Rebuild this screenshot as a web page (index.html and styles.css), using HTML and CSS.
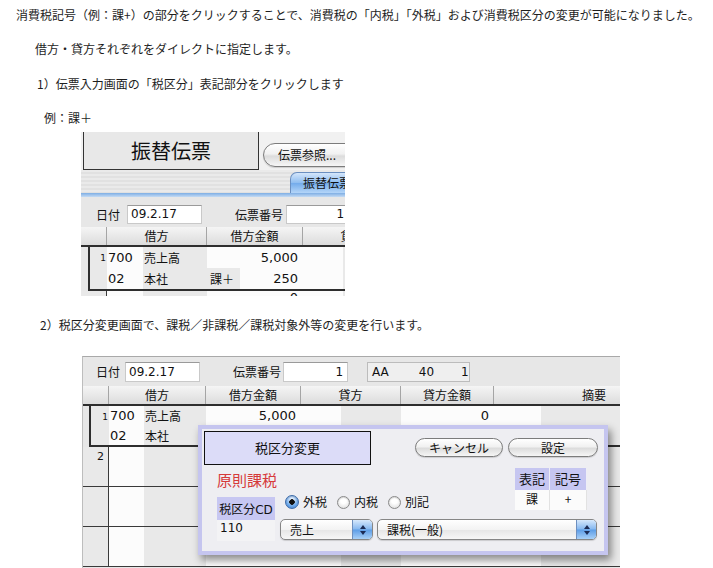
FILE: index.html
```html
<!DOCTYPE html>
<html lang="ja">
<head>
<meta charset="utf-8">
<title>税区分変更</title>
<link rel="stylesheet" href="styles.css">
</head>
<body>
<p class="t lead">消費税記号（例：課+）の部分をクリックすることで、消費税の「内税」「外税」および消費税区分の変更が可能になりました。</p>
<p class="t sub">借方・貸方それぞれをダイレクトに指定します。</p>
<p class="t step1">1）伝票入力画面の「税区分」表記部分をクリックします</p>
<p class="t ex">例：課＋</p>

<div class="shot shot1">
  <div class="s1-top">
    <div class="s1-title">振替伝票</div>
    <div class="s1-btnwrap"><div class="aqua-btn s1-btn">伝票参照...</div></div>
  </div>
  <div class="s1-band"><div class="s1-tab">振替伝票</div></div>
  <div class="s1-blue"></div>
  <div class="form f1">
    <span class="lbl l-date">日付</span>
    <span class="inp i-date">09.2.17</span>
    <span class="lbl l-no">伝票番号</span>
    <span class="inp i-no">1</span>
  </div>
  <div class="hdr g1">
    <div class="h"></div>
    <div class="h s2">借方</div>
    <div class="h">借方金額</div>
    <div class="h s2">貸方</div>
  </div>
  <div class="box b1">
    <div class="row g1b">
      <div class="rn">1</div>
      <div class="c w lat">700</div>
      <div class="c g">売上高</div>
      <div class="c w num">5,000</div>
      <div class="c w"></div>
      <div class="c g"></div>
    </div>
    <div class="row g1b">
      <div class="rn"></div>
      <div class="c w lat">02</div>
      <div class="c g">本社</div>
      <div class="c split"><span class="tax">課＋</span><span class="amt num">250</span></div>
      <div class="c w"></div>
      <div class="c g"></div>
    </div>
  </div>
  <div class="erow1 g1">
    <div class="rn2"></div>
    <div class="c w"></div>
    <div class="c g"></div>
    <div class="c w num">0</div>
    <div class="c w"></div>
    <div class="c g"></div>
  </div>
</div>

<p class="t step2">2）税区分変更画面で、課税／非課税／課税対象外等の変更を行います。</p>

<div class="shot shot2">
  <div class="form f2">
    <span class="lbl l-date">日付</span>
    <span class="inp i-date">09.2.17</span>
    <span class="lbl l-no">伝票番号</span>
    <span class="inp i-no">1</span>
    <span class="aa"><span>AA</span><span class="aa40">40</span><span class="aa1">1</span></span>
  </div>
  <div class="hdr g2">
    <div class="h"></div>
    <div class="h s2">借方</div>
    <div class="h">借方金額</div>
    <div class="h s2">貸方</div>
    <div class="h">貸方金額</div>
    <div class="h s2 hright">摘要</div>
  </div>
  <div class="box b2">
    <div class="row g2b">
      <div class="rn">1</div>
      <div class="c w lat">700</div>
      <div class="c g">売上高</div>
      <div class="c w num">5,000</div>
      <div class="c w"></div>
      <div class="c g"></div>
      <div class="c w num">0</div>
      <div class="c w"></div>
      <div class="c g"></div>
    </div>
    <div class="row g2b">
      <div class="rn"></div>
      <div class="c w lat">02</div>
      <div class="c g">本社</div>
      <div class="c g"></div>
      <div class="c w"></div>
      <div class="c g"></div>
      <div class="c w"></div>
      <div class="c w"></div>
      <div class="c g"></div>
    </div>
  </div>
  <div class="erow g2">
    <div class="rn2">2</div>
    <div class="c w"></div><div class="c g"></div><div class="c w"></div><div class="c w"></div>
    <div class="c g"></div><div class="c w"></div><div class="c w"></div><div class="c g"></div>
  </div>
  <div class="erow g2">
    <div class="rn2"></div>
    <div class="c w"></div><div class="c g"></div><div class="c w"></div><div class="c w"></div>
    <div class="c g"></div><div class="c w"></div><div class="c w"></div><div class="c g"></div>
  </div>
  <div class="erow g2">
    <div class="rn2"></div>
    <div class="c w"></div><div class="c g"></div><div class="c w"></div><div class="c w"></div>
    <div class="c g"></div><div class="c w"></div><div class="c w"></div><div class="c g"></div>
  </div>

  <div class="dlg">
    <div class="dlg-top">
      <div class="dlg-title">税区分変更</div>
      <div class="dlg-btns">
        <div class="aqua-btn b-cancel">キャンセル</div>
        <div class="aqua-btn b-set">設定</div>
      </div>
    </div>
    <div class="dlg-body">
      <div class="gensoku">原則課税</div>
      <div class="kigo">
        <div class="kh">表記</div><div class="kh">記号</div>
        <div class="kd">課</div><div class="kd">+</div>
      </div>
      <div class="cd-lbl">税区分<span class="lat">CD</span></div>
      <div class="cd-val lat">110</div>
      <div class="radios">
        <span class="radio on"></span><span class="rl">外税</span>
        <span class="radio"></span><span class="rl">内税</span>
        <span class="radio"></span><span class="rl">別記</span>
      </div>
      <div class="pop pop1"><span class="pt">売上</span><span class="pa"><svg width="8" height="12" viewBox="0 0 8 12"><path d="M4 1 L7 5 L1 5 Z M4 11 L1 7 L7 7 Z" fill="#1b2b55"/></svg></span></div>
      <div class="pop pop2"><span class="pt">課税(一般)</span><span class="pa"><svg width="8" height="12" viewBox="0 0 8 12"><path d="M4 1 L7 5 L1 5 Z M4 11 L1 7 L7 7 Z" fill="#1b2b55"/></svg></span></div>
    </div>
  </div>
</div>
</body>
</html>
```

FILE: styles.css
```css
* { box-sizing: border-box; }
html, body { margin: 0; padding: 0; }
body {
  width: 713px;
  height: 568px;
  overflow: hidden;
  background: #fff;
  color: #1e1e1e;
  font-family: "Noto Sans CJK JP", "Noto Sans", sans-serif;
}
.t {
  margin: 0;
  font-size: 12px;
  line-height: 20px;
  height: 20px;
  white-space: nowrap;
}
.lead { margin-top: 5px; padding-left: 16px; }
.sub { margin-top: 14px; padding-left: 35px; }
.step1 { margin-top: 15px; padding-left: 37px; }
.ex { margin-top: 14px; padding-left: 44px; }
.step2 { margin-top: 19px; padding-left: 40px; }

.lat { font-family: "DejaVu Sans", "Noto Sans CJK JP", sans-serif; }

.shot {
  position: relative;
  overflow: hidden;
  background: #e7e7e7;
  font-size: 12px;
  color: #111;
}
.shot1 { margin: 4px 0 0 81px; width: 264px; height: 164px; }
.shot2 {
  margin: 21px 0 0 82px;
  width: 538px;
  height: 212px;
  border-top: 1px solid #a9a9a9;
  border-left: 1px solid #bdbdbd;
}

/* shot 1 top part */
.s1-top { display: flex; height: 38px; background: #f1f1f1; }
.s1-title {
  margin-left: 2px;
  width: 176px;
  height: 38px;
  flex: none;
  background: #e8e8e8;
  border: 1px solid #333;
  border-top: none;
  font-size: 20px;
  display: flex;
  align-items: center;
  justify-content: center;
}
.s1-btnwrap { padding: 11px 0 0 4px; }
.aqua-btn {
  height: 19px;
  border: 1px solid #7c7c7c;
  border-radius: 10px;
  background: linear-gradient(#ffffff, #f1f1f1 45%, #dcdcdc 55%, #f6f6f6);
  box-shadow: 0 1px 1px rgba(0,0,0,.15);
  font-size: 12px;
  line-height: 17px;
  text-align: center;
  flex: none;
}
.s1-btn {
  width: 100px;
  height: 24px;
  line-height: 22px;
  border-radius: 12px;
  text-align: left;
  padding-left: 14px;
}
.s1-band {
  height: 23px;
  display: flex;
  padding: 2px 0 0 209px;
  background: repeating-linear-gradient(#eaeaea 0 2px, #e1e1e1 2px 4px);
}
.s1-tab {
  width: 70px;
  height: 21px;
  flex: none;
  border: 1px solid #6b8fc0;
  border-bottom: none;
  border-radius: 7px 0 0 0;
  background: linear-gradient(#d4e6fb, #8dbcf0 50%, #74acec 52%, #b4d5f8);
  font-size: 12px;
  line-height: 20px;
  padding-left: 12px;
  white-space: nowrap;
}
.s1-blue { height: 4px; background: linear-gradient(#7eaee4, #c4dbf4); }

/* form rows */
.form { display: flex; align-items: flex-start; white-space: nowrap; }
.f1 { height: 30px; padding-top: 8px; }
.f2 { height: 29px; padding-top: 5px; }
.lbl { font-size: 12px; line-height: 19px; flex: none; }
.inp {
  flex: none;
  height: 19px;
  background: #fff;
  border: 1px solid #c9c9c9;
  border-top-color: #9a9a9a;
  font-family: "DejaVu Sans", sans-serif;
  font-size: 12px;
  line-height: 17px;
  padding: 0 3px;
}
.f2 .inp { height: 20px; line-height: 18px; }
.f1 .l-date { margin-left: 15px; }
.f1 .i-date { margin-left: 7px; width: 75px; }
.f1 .l-no { margin-left: 33px; }
.f1 .i-no { margin-left: 3px; width: 62px; text-align: right; }
.f2 .l-date { margin-left: 13px; }
.f2 .i-date { margin-left: 5px; width: 75px; }
.f2 .l-no { margin-left: 33px; }
.f2 .i-no { margin-left: 2px; width: 65px; text-align: right; padding-right: 4px; }
.aa {
  flex: none;
  margin-left: 19px;
  width: 103px;
  height: 20px;
  display: flex;
  border: 1px solid #bcbcbc;
  background: #efefef;
  font-family: "DejaVu Sans", sans-serif;
  font-size: 12px;
  line-height: 18px;
  padding-left: 4px;
}
.aa40 { margin-left: 30px; }
.aa1 { margin-left: 27px; }

/* tables */
.g1 { display: grid; grid-template-columns: 26px 36px 64px 96px 40px 60px; }
.g1b { display: grid; grid-template-columns: 17px 36px 64px 96px 40px 60px; }
.g2 { display: grid; grid-template-columns: 26px 35px 62px 95px 40px 60px 93px 47px 80px; }
.g2b { display: grid; grid-template-columns: 18px 35px 62px 95px 40px 60px 93px 47px 80px; }

.hdr {
  height: 20px;
  border-bottom: 2px solid #2e2e2e;
}
.shot1 .hdr { width: 322px; }
.h {
  background: linear-gradient(#f5f5f5, #dcdcdc);
  border-right: 1px solid #a5a5a5;
  text-align: center;
  line-height: 18px;
  white-space: nowrap;
  overflow: hidden;
}
.s2 { grid-column: span 2; }
.hright { text-align: right; padding-right: 14px; }

.box {
  border-left: 2px solid #2e2e2e;
  border-bottom: 2px solid #2e2e2e;
}
.b1 { margin-left: 7px; width: 330px; }
.b2 { margin-left: 6px; width: 540px; }
.b1 .row { height: 21px; }
.b2 .row { height: 19.5px; }
.c { white-space: nowrap; overflow: hidden; line-height: 19px; }
.b1 .c { line-height: 21px; }
.w { background: #fcfcfc; }
.g { background: #e9e9e9; }
.lat.c { padding-left: 1px; font-size: 13px; }
.c.g { padding-left: 1px; }
.num {
  text-align: right;
  padding-right: 5px;
  font-family: "DejaVu Sans", sans-serif;
  font-size: 13px;
}
.rn {
  background: #e9e9e9;
  font-family: "DejaVu Sans", sans-serif;
  font-size: 9px;
  text-align: right;
  padding: 5px 1px 0 0;
  line-height: 12px;
}
.split { display: flex; background: #e9e9e9; }
.split .tax { width: 33px; padding-left: 3px; }
.split .amt { flex: 1; background: #fcfcfc; }

.erow1 { height: 20px; }
.erow1 .c { line-height: 14px; }
.erow1 .rn2 { background: #e9e9e9; }

.erow { height: 40px; border-bottom: 1px solid #3a3a3a; }
.rn2 {
  background: #e9e9e9;
  border-right: 1px solid #3a3a3a;
  font-family: "DejaVu Sans", sans-serif;
  font-size: 11px;
  line-height: 20px;
  text-align: right;
  padding-right: 4px;
}

/* dialog */
.dlg {
  position: absolute;
  left: 115px;
  top: 68px;
  width: 410px;
  height: 130px;
  border: 4px solid #c5c5ef;
  background: #eeeef2;
  box-shadow: 3px 5px 8px rgba(0,0,0,.45);
  font-size: 12px;
}
.dlg-top { display: flex; height: 36px; }
.dlg-title {
  flex: none;
  margin: 2px 0 0 2px;
  width: 167px;
  height: 34px;
  border: 1px solid #111;
  background: #dcdcf8;
  font-size: 13px;
  line-height: 32px;
  text-align: center;
}
.dlg-btns { display: flex; gap: 5px; margin: 9px 0 0 44px; }
.b-cancel { width: 88px; }
.b-set { width: 90px; }

.dlg-body {
  display: grid;
  grid-template-columns: 15px 58px 5px 93px 4px 220px;
  grid-template-rows: 29px 26px 21px;
}
.gensoku {
  grid-column: 2 / 5;
  grid-row: 1;
  margin-top: 5px;
  height: 20px;
  line-height: 20px;
  font-size: 15px;
  color: #d63a3a;
}
.kigo {
  grid-column: 6;
  grid-row: 1 / 3;
  justify-self: end;
  align-self: start;
  margin: 3px 10px 0 0;
  width: 72px;
  display: grid;
  grid-template-columns: 35px 37px;
  grid-template-rows: 22px 20px;
}
.kh {
  background: #c6c6f1;
  border-right: 1px solid #eeeef6;
  text-align: center;
  line-height: 22px;
  font-size: 13px;
}
.kd {
  background: #fbfbfb;
  border-right: 1px solid #e2e2e2;
  text-align: center;
  line-height: 18px;
}
.cd-lbl {
  grid-column: 2;
  grid-row: 2;
  margin-top: 3px;
  height: 23px;
  background: #c7c7f2;
  line-height: 23px;
  text-align: center;
  white-space: nowrap;
}
.cd-val {
  grid-column: 2;
  grid-row: 3;
  background: #f3f3f5;
  padding-left: 3px;
  line-height: 16px;
  font-size: 12px;
}
.radios {
  grid-column: 4 / 7;
  grid-row: 2;
  display: flex;
  align-items: center;
  height: 16px;
}
.radio {
  flex: none;
  width: 13px;
  height: 13px;
  border-radius: 50%;
  border: 1px solid #8a8a8a;
  background: radial-gradient(circle at 50% 35%, #fff 30%, #e2e2e2 80%);
  box-shadow: inset 0 1px 1px rgba(0,0,0,.15);
  margin-left: 10px;
}
.radio:first-child { margin-left: 5px; }
.radio.on {
  width: 14px;
  height: 14px;
  border-color: #3d6aa8;
  background: radial-gradient(circle at 50% 50%, #111 0 2.5px, transparent 3px),
              radial-gradient(circle at 50% 30%, #e6f1ff 10%, #6ea9ea 60%, #3f7fd0 100%);
}
.rl { margin-left: 4px; line-height: 16px; }

.pop {
  grid-row: 3;
  margin-top: -1px;
  height: 21px;
  display: flex;
  border: 1px solid #868686;
  border-radius: 5px;
  background: linear-gradient(#ffffff, #f3f3f3 50%, #e6e6e6 52%, #f7f7f7);
  box-shadow: 0 1px 1px rgba(0,0,0,.15);
  overflow: hidden;
}
.pop1 { grid-column: 4; }
.pop2 { grid-column: 6; }
.pt { flex: 1; padding-left: 9px; line-height: 19px; font-size: 12px; white-space: nowrap; }
.pa {
  flex: none;
  width: 20px;
  display: flex;
  align-items: center;
  justify-content: center;
  border-left: 1px solid #6d8fbf;
  background: linear-gradient(#d6e8fc, #86b8f0 48%, #5d9de6 52%, #a8d0f8);
}
```
